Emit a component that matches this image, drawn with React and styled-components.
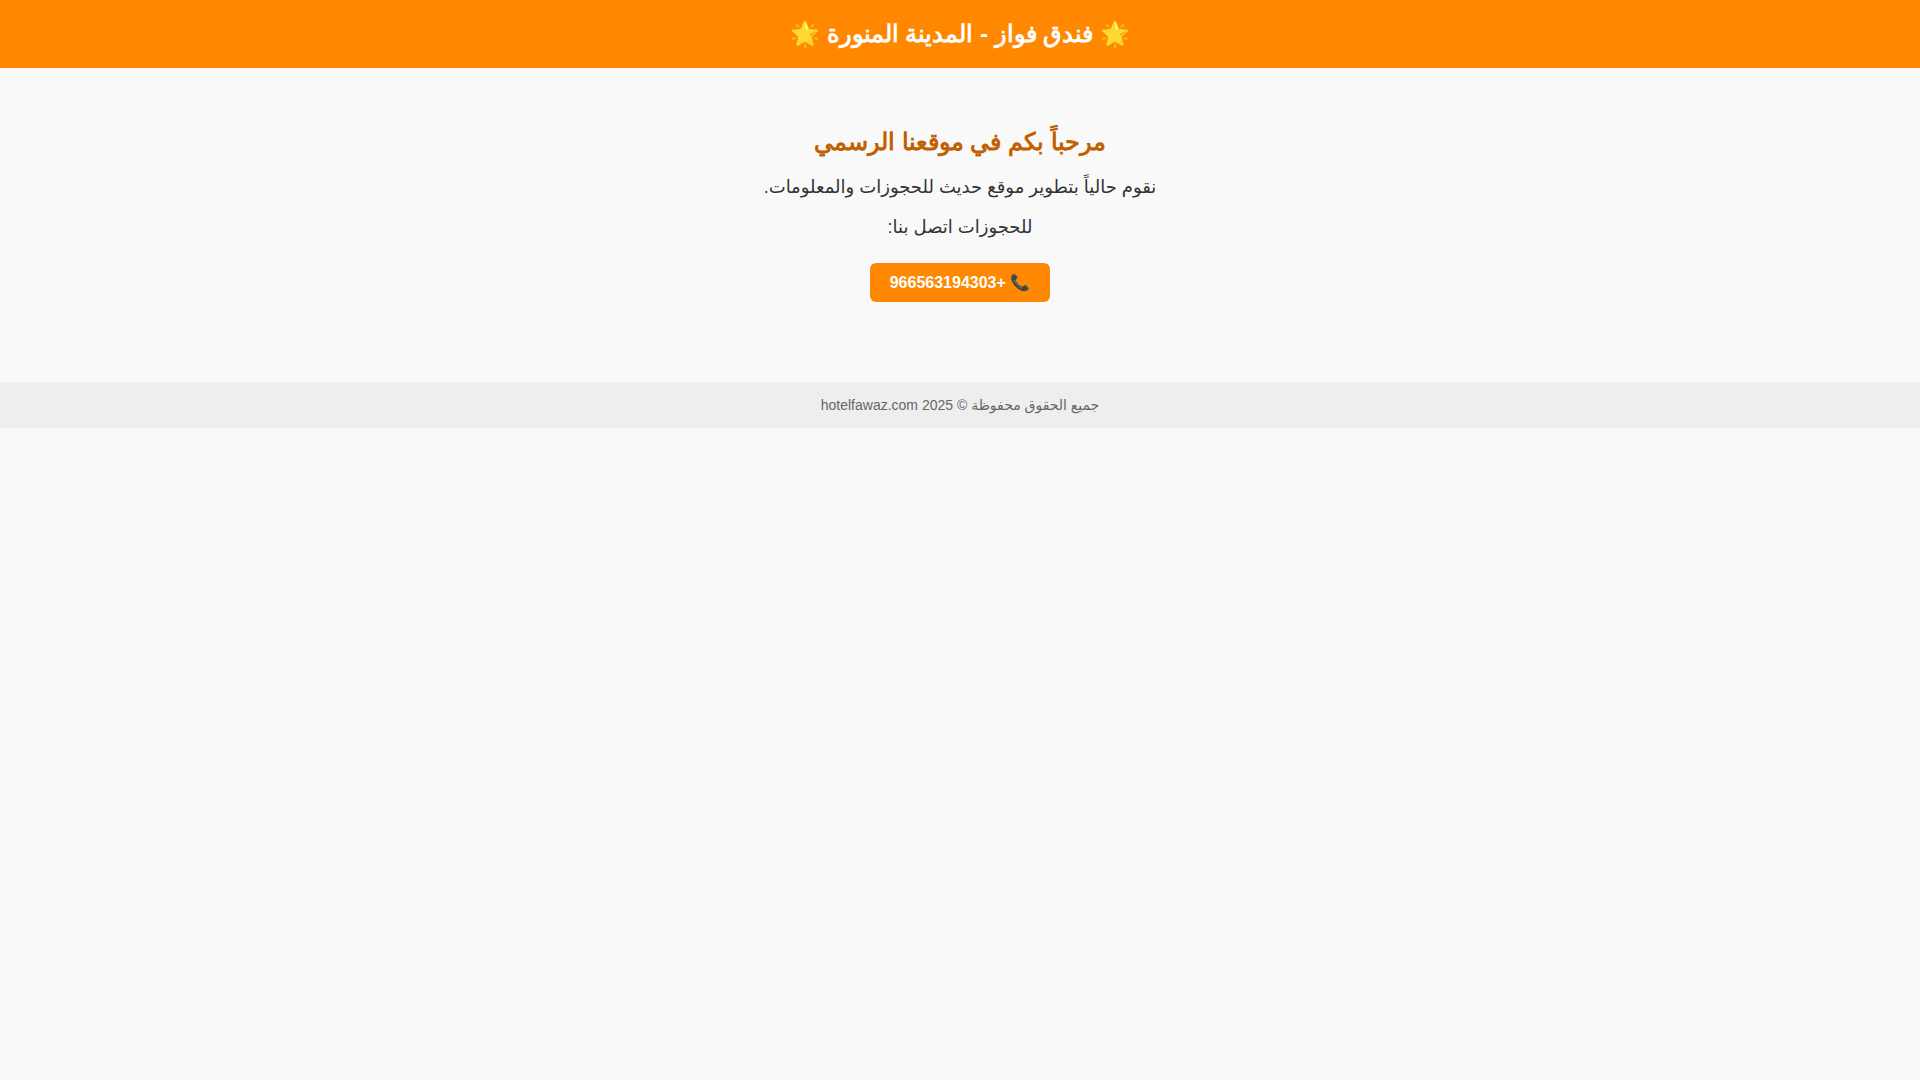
import React from "react";
import styled, { createGlobalStyle } from "styled-components";

const GlobalStyle = createGlobalStyle`
  body {
    margin: 0;
    background: #f9f9f9;
    color: #333;
    font-family: "Liberation Sans", "DejaVu Sans", sans-serif;
    text-align: center;
  }
`;

const headingFont = `"Liberation Sans", "Open Sans", serif`;

const Header = styled.header`
  padding: 20px;
  background: #ff8800;
  color: #fff;
  font-family: ${headingFont};
  font-size: 24px;
  font-weight: bold;
`;

const Main = styled.main`
  padding: 60px 20px;
`;

const Title = styled.h1`
  margin: 0 0 20px;
  color: #c06000;
  font-family: ${headingFont};
  font-size: 24px;
`;

const Text = styled.p`
  margin: 18px 0;
  font-size: 18px;
`;

const CallLink = styled.a`
  display: inline-block;
  margin-top: 7px;
  padding: 10px 20px;
  border-radius: 6px;
  background: #ff8800;
  color: #fff;
  font-size: 16px;
  font-weight: bold;
  text-decoration: none;
`;

const Footer = styled.footer`
  margin-top: 20px;
  padding: 15px;
  background: #eee;
  color: #666;
  font-size: 14px;
`;

export default function App() {
  return (
    <div dir="rtl" lang="ar">
      <GlobalStyle />
      <Header>🌟 فندق فواز - المدينة المنورة 🌟</Header>
      <Main>
        <Title>مرحباً بكم في موقعنا الرسمي</Title>
        <Text>نقوم حالياً بتطوير موقع حديث للحجوزات والمعلومات.</Text>
        <Text>للحجوزات اتصل بنا:</Text>
        <CallLink href="tel:+966563194303">📞 +966563194303</CallLink>
      </Main>
      <Footer>جميع الحقوق محفوظة © 2025 hotelfawaz.com</Footer>
    </div>
  );
}
